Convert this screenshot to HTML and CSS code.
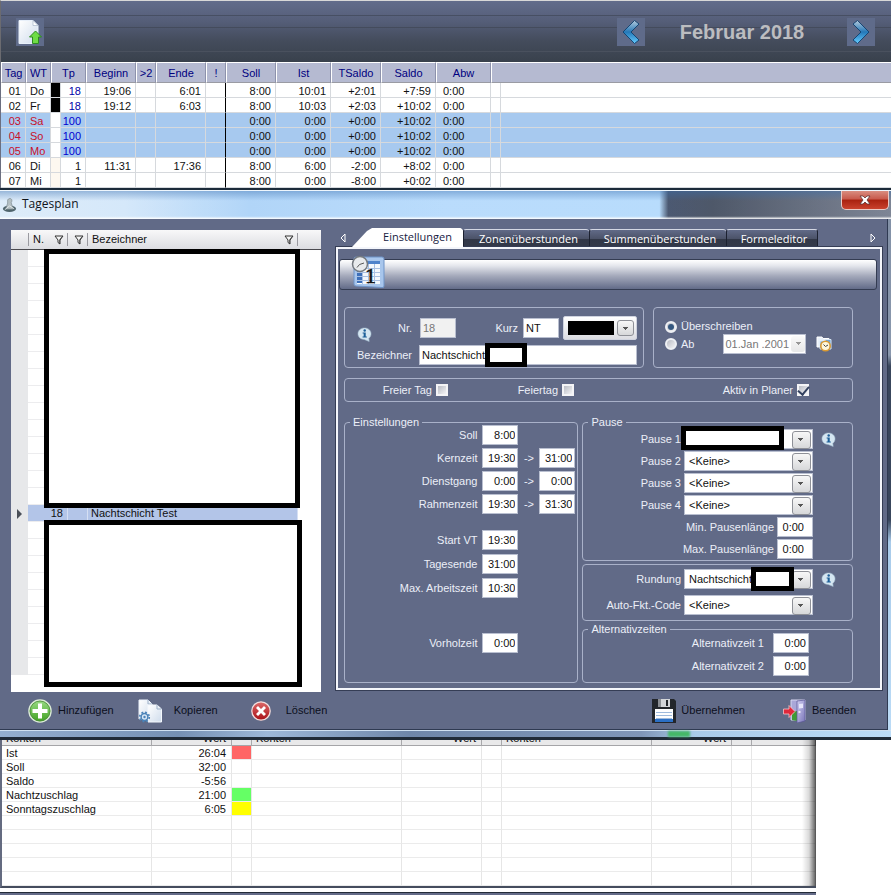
FILE: index.html
```html
<!DOCTYPE html>
<html lang="de">
<head>
<meta charset="utf-8">
<title>Tagesplan</title>
<link rel="stylesheet" href="styles.css">
</head>
<body>
<svg class="defs" width="0" height="0" aria-hidden="true">
  <defs>
    <linearGradient id="gArrow" x1="0" y1="0" x2="0" y2="1"><stop offset="0" stop-color="#b4c9da"/><stop offset=".5" stop-color="#2478b8"/><stop offset="1" stop-color="#66ccff"/></linearGradient>
    <linearGradient id="gPage" x1="0" y1="0" x2="1" y2="1"><stop offset="0" stop-color="#ffffff"/><stop offset="1" stop-color="#cfdcec"/></linearGradient>
    <linearGradient id="gGreen" x1="0" y1="0" x2="0" y2="1"><stop offset="0" stop-color="#9bdc86"/><stop offset="1" stop-color="#3fa01f"/></linearGradient>
    <linearGradient id="gRed" x1="0" y1="0" x2="0" y2="1"><stop offset="0" stop-color="#dd6a6a"/><stop offset="1" stop-color="#a80f17"/></linearGradient>
    <linearGradient id="gDoor" x1="0" y1="0" x2="1" y2="1"><stop offset="0" stop-color="#cfcdf2"/><stop offset="1" stop-color="#7a76b8"/></linearGradient>
    <symbol id="info" viewBox="0 0 16 16">
      <path d="M8 1C4 1 1 3.6 1 7.2S4 13.300 7.600 13.300L13 15.500L12.600 12C14.200 10.900 15 9.200 15 7.200C15 3.600 12 1 8 1Z" fill="#d5e6f1" stroke="#9db8cc" stroke-width=".6"/>
      <circle cx="8.200" cy="3.700" r="1.300" fill="#1d5f98"/>
      <path d="M6 5.800H9.300V10H10.500V11.300H5.900V10H7.100V7H6Z" fill="#1d5f98"/>
    </symbol>
    <symbol id="funnel" viewBox="0 0 10 10">
      <path d="M1 1H9L6 5V9L4 7.500V5Z" fill="#f5f5f5" stroke="#333" stroke-width="1"/><path d="M5.500 4.500L8 1.500L8.500 1.500L6 5V8.500L5.500 8Z" fill="#333"/>
    </symbol>
  </defs>
</svg>

<header class="toolbar">
  <button class="tool" aria-label="Exportieren">
    <svg viewBox="0 0 28 28"><path d="M3 2.500H17L22 7.500V25.500H3Z" fill="url(#gPage)" stroke="#e8f0fa"/><path d="M17 2.500V7.500H22Z" fill="#fff" stroke="#a9b8ca" stroke-width=".7"/><path d="M19.500 13L25.500 19H22.500V25.500H16.500V19H13.500Z" fill="#6fdc45" stroke="#2d8a1e"/></svg>
  </button>
  <div class="month">
    <button class="tool" aria-label="Vorheriger Monat">
      <svg viewBox="0 0 28 28"><path d="M17.500 2.500L22 6L14 14L22 22L17.500 25.500L6 14Z" fill="url(#gArrow)" stroke="#0f3f6e" stroke-width=".9"/></svg>
    </button>
    <h1>Februar 2018</h1>
    <button class="tool" aria-label="Nächster Monat">
      <svg viewBox="0 0 28 28"><path d="M10.500 2.500L6 6L14 14L6 22L10.500 25.500L22 14Z" fill="url(#gArrow)" stroke="#0f3f6e" stroke-width=".9"/></svg>
    </button>
  </div>
</header>

<table class="days">
  <colgroup><col class="w25"><col class="w25"><col class="w10"><col class="w25"><col class="w50"><col class="w20"><col class="w50"><col class="w20"><col class="w50"><col class="w55"><col class="w50"><col class="w55"><col class="w55"><col class="w10"><col></colgroup>
  <thead><tr><th>Tag</th><th>WT</th><th colspan="2">Tp</th><th>Beginn</th><th>&gt;2</th><th>Ende</th><th>!</th><th>Soll</th><th>Ist</th><th>TSaldo</th><th>Saldo</th><th>Abw</th><th colspan="2"></th></tr></thead>
  <tbody id="days"></tbody>
</table>

<section class="dialog" aria-label="Tagesplan">
  <div class="titlebar">
    <svg class="app" viewBox="0 0 16 16"><ellipse cx="8" cy="12" rx="7" ry="3.500" fill="#4f646c"/><path d="M6 2.500C8 0 11 1 10.500 4L9.800 5.500L12 12.500H4L6 6Z" fill="#b4bfc3" stroke="#6f7d82" stroke-width=".6"/><path d="M3 13L8 9L13 12" stroke="#dfe6e8" fill="none"/></svg>
    <h2>Tagesplan</h2>
    <button class="close" aria-label="Schließen"><svg viewBox="0 0 12 10"><path d="M1 1H4L6 3L8 1H11L8 5L11 9H8L6 7L4 9H1L4 5Z" fill="#fff" stroke="#5a3434" stroke-width=".8"/></svg></button>
  </div>

  <div class="client">
    <div class="main">
      <div class="list">
        <table class="plans">
          <colgroup><col class="w17"><col class="w40"><col class="w20"><col><col class="w23"></colgroup>
          <thead><tr><th></th><th><span>N.<svg class="fn"><use href="#funnel"/></svg></span></th><th><span><svg class="fn"><use href="#funnel"/></svg></span></th><th><span>Bezeichner<svg class="fn"><use href="#funnel"/></svg></span></th><th></th></tr></thead>
          <tbody id="plans"></tbody>
        </table>
        <div class="mask mask-top"></div>
        <div class="mask mask-bottom"></div>
      </div>

      <div class="editor">
        <nav class="tabs">
          <button class="scroll" aria-label="Zurück"><svg viewBox="0 0 6 10"><path d="M5 1L1 5L5 9Z" fill="none" stroke="#fff"/></svg></button>
          <button class="tab active">Einstellungen</button>
          <button class="tab t2">Zonenüberstunden</button>
          <button class="tab t3">Summenüberstunden</button>
          <button class="tab t4">Formeleditor</button>
          <button class="scroll next" aria-label="Weiter"><svg viewBox="0 0 6 10"><path d="M1 1L5 5L1 9Z" fill="none" stroke="#fff"/></svg></button>
        </nav>
        <div class="page">
          <div class="banner">
            <svg class="calendar" viewBox="0 0 34 34">
              <path d="M5 2H31Q33 2 33 4V31Q33 33 31 32.500L5 31Q3 31 3 29V4Q3 2 5 2Z" fill="#a8c6ec" stroke="#6f94c8"/>
              <path d="M6 6H29V29H6Z" fill="#f4f8fd"/>
              <path d="M6 6H29V9H6Z" fill="#4f83cb"/><path d="M6 10H11V28H6Z" fill="#3d6fb9"/>
              <path d="M6 13.500H29M6 17.500H29M6 21.500H29M6 25.500H29M11.500 9V29M17.500 9V29M23.500 9V29" stroke="#a9c0e2"/>
              <circle cx="9" cy="9" r="7.500" fill="#e8eaec" stroke="#74797f" stroke-width="1.500"/><path d="M13 8L8.500 9.500L6 12.500" fill="none" stroke="#555"/>
              <text x="14" y="28" class="calnum">1</text>
            </svg>
          </div>

          <div class="form">
            <div class="pair">
              <div class="group ident">
                <div class="line">
                  <svg class="info low"><use href="#info"/></svg>
                  <label class="push" for="nr">Nr.</label>
                  <input id="nr" class="time left" value="18" disabled>
                  <label class="push kurz" for="kurz">Kurz</label>
                  <input id="kurz" class="time left" value="NT">
                  <button class="color" aria-label="Farbe"><span class="swatch"></span><span class="drop"></span></button>
                </div>
                <div class="line">
                  <label class="lead" for="bez">Bezeichner</label>
                  <span class="field grow"><input id="bez" class="left wide" value="Nachtschicht"><span class="mask mask-name"></span></span>
                </div>
              </div>
              <div class="group mode">
                <div class="opts">
                  <label><input type="radio" name="mode" checked>Überschreiben</label>
                  <div class="line tight">
                    <label><input type="radio" name="mode">Ab</label>
                    <span class="combo date off"><select aria-label="Datum" disabled><option>01.Jan .2001</option></select></span>
                    <svg class="hist" viewBox="0 0 16 16"><path d="M1 1H6L7 2.500H13V11H1Z" fill="#e9f1fa" stroke="#fff"/><path d="M4 5H9L10 3.500H15V13H4Z" fill="#6fa3d8" stroke="#dbe9f7"/><circle cx="9.500" cy="10" r="4.700" fill="#fdf6dc" stroke="#d99a33" stroke-width="1.600"/><path d="M7.500 8.500L9.500 10.500L12 9" fill="none" stroke="#444"/></svg>
                  </div>
                </div>
              </div>
            </div>

            <div class="group flags">
              <label>Freier Tag<input type="checkbox"></label>
              <label>Feiertag<input type="checkbox"></label>
              <label>Aktiv in Planer<input type="checkbox" checked></label>
            </div>

            <div class="cols">
              <fieldset class="times">
                <legend>Einstellungen</legend>
                <div class="grid up">
                  <label for="soll">Soll</label><input id="soll" class="time" value="8:00"><i></i><i></i>
                  <label for="kern">Kernzeit</label><input id="kern" class="time" value="19:30"><span>-&gt;</span><input class="time" aria-label="Kernzeit bis" value="31:00">
                  <label for="dienst">Dienstgang</label><input id="dienst" class="time" value="0:00"><span>-&gt;</span><input class="time" aria-label="Dienstgang bis" value="0:00">
                  <label for="rahmen">Rahmenzeit</label><input id="rahmen" class="time" value="19:30"><span>-&gt;</span><input class="time" aria-label="Rahmenzeit bis" value="31:30">
                </div>
                <div class="grid day">
                  <label for="start">Start VT</label><input id="start" class="time" value="19:30"><i></i><i></i>
                  <label for="ende">Tagesende</label><input id="ende" class="time" value="31:00"><i></i><i></i>
                  <label for="maxa">Max. Arbeitszeit</label><input id="maxa" class="time" value="10:30"><i></i><i></i>
                </div>
                <div class="grid extra">
                  <label for="vor">Vorholzeit</label><input id="vor" class="time" value="0:00"><i></i><i></i>
                </div>
              </fieldset>

              <div class="stack">
                <fieldset class="pause">
                  <legend>Pause</legend>
                  <div class="rows">
                    <div class="row"><label for="p1">Pause 1</label><span class="combo"><select id="p1"><option></option></select><span class="mask mask-pause"></span></span><svg class="info"><use href="#info"/></svg></div>
                    <div class="row"><label for="p2">Pause 2</label><span class="combo"><select id="p2"><option>&lt;Keine&gt;</option></select></span></div>
                    <div class="row"><label for="p3">Pause 3</label><span class="combo"><select id="p3"><option>&lt;Keine&gt;</option></select></span></div>
                    <div class="row"><label for="p4">Pause 4</label><span class="combo"><select id="p4"><option>&lt;Keine&gt;</option></select></span></div>
                    <div class="row short"><label for="pmin">Min. Pausenlänge</label><input id="pmin" class="time mid" value="0:00"></div>
                    <div class="row short"><label for="pmax">Max. Pausenlänge</label><input id="pmax" class="time mid" value="0:00"></div>
                  </div>
                </fieldset>
                <div class="group round">
                  <div class="row"><label for="rund">Rundung</label><span class="combo"><select id="rund"><option>Nachtschicht</option></select><span class="mask mask-round"></span></span><svg class="info"><use href="#info"/></svg></div>
                  <div class="row"><label for="auto">Auto-Fkt.-Code</label><span class="combo"><select id="auto"><option>&lt;Keine&gt;</option></select></span></div>
                </div>
                <fieldset class="alt">
                  <legend>Alternativzeiten</legend>
                  <div class="rows alt-rows">
                    <div class="row"><label for="a1">Alternativzeit 1</label><input id="a1" class="time" value="0:00"></div>
                    <div class="row"><label for="a2">Alternativzeit 2</label><input id="a2" class="time" value="0:00"></div>
                  </div>
                </fieldset>
              </div>
            </div>
          </div>
        </div>
      </div>
    </div>

    <footer class="actions">
      <button class="add"><svg viewBox="0 0 24 24"><circle cx="12" cy="12" r="11" fill="url(#gGreen)" stroke="#dcebd8" stroke-width="1.500"/><circle cx="12" cy="12" r="10" fill="none" stroke="#4b8a3a" stroke-width=".8"/><path d="M10 4.500H14V10H19.500V14H14V19.500H10V14H4.500V10H10Z" fill="#fff"/></svg>Hinzufügen</button>
      <button class="copy"><svg viewBox="0 0 24 24"><path d="M1 1H10L14 5V20H1Z" fill="url(#gPage)" stroke="#edf3fb"/><path d="M10 1V5H14" fill="none" stroke="#9cb0c8"/><path d="M10 6H19L23.500 10V23H10Z" fill="url(#gPage)" stroke="#f4f8fd"/><path d="M19 6V10H23.500" fill="none" stroke="#9cb0c8"/><circle cx="6.500" cy="18" r="3.400" fill="#d6e6f5" stroke="#4b83b8" stroke-width="1.500"/><circle cx="6.500" cy="18" r="4.800" fill="none" stroke="#4b83b8" stroke-width="1.600" stroke-dasharray="1.900 1.870"/><circle cx="6.500" cy="18" r="1.200" fill="#4b83b8"/></svg>Kopieren</button>
      <button class="del"><svg viewBox="0 0 20 20"><circle cx="10" cy="10" r="9.200" fill="url(#gRed)" stroke="#f1dede" stroke-width="1.300"/><path d="M5 7L7 5L10 8L13 5L15 7L12 10L15 13L13 15L10 12L7 15L5 13L8 10Z" fill="#fff"/></svg>Löschen</button>
      <button class="save"><svg viewBox="0 0 24 24"><path d="M0 0H22L24 2V24H0Z" fill="#23262b"/><path d="M6 0H18V8H6Z" fill="#d3d5d8"/><path d="M14 1H16V7H14Z" fill="#23262b"/><path d="M6 0H9V8H6Z" fill="#8b8e93"/><path d="M3 10H21V23H3Z" fill="#fdfdfe"/><path d="M3 20H21V23H3Z" fill="#2b6fc4"/><path d="M4 13.500H20M4 16.500H20M4 19.500H20" stroke="#9db9dc"/></svg>Übernehmen</button>
      <button class="quit"><svg viewBox="0 0 24 24"><path d="M8 1H22V21H8Z" fill="#a9a7d8" stroke="#d8d7f0"/><path d="M9 12H14V22L9 21Z" fill="#3f9a35"/><path d="M14 2L22 1V22L14 24Z" fill="url(#gDoor)" stroke="#5a5695" stroke-width=".7"/><path d="M16 5L20 4.500V9L16 9.500Z" fill="#e6e6fa"/><path d="M15.500 13H17.500" stroke="#fff" stroke-width="1.500"/><path d="M.5 10H6V6.500L12 12.500L6 18.500V15H.5Z" fill="#e0283c" stroke="#f6c3c8" stroke-width=".8"/></svg>Beenden</button>
    </footer>
  </div>
  <div class="frame-bottom"><span class="ghost"></span></div>
</section>

<section class="accounts">
  <table>
    <colgroup><col><col class="w80"><col class="w20"><col><col class="w80"><col class="w20"><col><col class="w80"><col class="w20"><col class="w64"></colgroup>
    <thead><tr><th>Konten</th><th class="r">Wert</th><th></th><th>Konten</th><th class="r">Wert</th><th></th><th>Konten</th><th class="r">Wert</th><th></th><th></th></tr></thead>
    <tbody id="accounts"></tbody>
  </table>
</section>
<div class="base"></div>
<script src="app.js"></script>
</body>
</html>
```
FILE: styles.css
```css
* { box-sizing: border-box; }
body {
  margin: 0;
  background: #fff;
  color: #111;
  font: 11px/13px "Liberation Sans", Arial, sans-serif;
}
button, input, select { font: inherit; color: inherit; margin: 0; }
button { border: 0; background: none; padding: 0; }
h1, h2 { margin: 0; font-weight: normal; }
table { border-collapse: separate; border-spacing: 0; table-layout: fixed; width: 100%; }
.defs { position: absolute; }

.w10 { width: 10px; } .w17 { width: 17px; } .w20 { width: 20px; } .w23 { width: 23px; }
.w25 { width: 25px; } .w40 { width: 40px; } .w50 { width: 50px; } .w55 { width: 55px; }
.w64 { width: 64px; } .w80 { width: 80px; }

/* Month toolbar */
.toolbar {
  display: flex;
  align-items: center;
  justify-content: space-between;
  height: 62px;
  padding: 0 16px 0 15px;
  border-top: 1px solid #d8d8d8;
  border-left: 1px solid #6b6b70;
  background:
    linear-gradient(#474f63, #474f63) 0 14px / 100% 1px no-repeat,
    linear-gradient(#444b5c, #444b5c) 0 26px / 100% 1px no-repeat,
    linear-gradient(#4a515e, #4a515e) 0 50px / 100% 1px no-repeat,
    linear-gradient(#626c8b, #545d77 35%, #444c5c 65%, #39414c);
}
.tool { width: 28px; height: 28px; background: #5f6b8a; }
.tool svg { display: block; width: 28px; height: 28px; }
.month { display: flex; align-items: center; }
.month h1 { width: 202px; padding-right: 8px; text-align: center; font: bold 20px/24px "Liberation Sans", Arial, sans-serif; color: #bcbdc0; }

/* Day table */
.days { border-left: 1px solid #6b6f80; }
.days th {
  height: 21px;
  padding: 2px 0 0;
  background: #b5bad1;
  border-top: 1px solid #fff;
  border-left: 1px solid #fff;
  border-right: 1px solid #8d92ab;
  border-bottom: 1px solid #9a9ba3;
  color: #00007f;
  font-weight: normal;
  text-align: center;
}
.days th:last-child { border-right: 0; }
.days td {
  height: 15px;
  padding: 2px 4px 0 0;
  border-right: 1px solid #d6d9dd;
  border-bottom: 1px solid #d6d9dd;
  line-height: 12px;
  text-align: right;
  white-space: nowrap;
}
.days td:nth-child(2), .days td:nth-child(13) { text-align: left; padding-left: 4px; }
.days td:nth-child(13) { padding-left: 7px; }
.days td:nth-child(3) { padding: 0; }
.days td:nth-child(8) { border-right: 1px solid #000; }
.days td:last-child { border-right: 0; }
.days .black { background: #000; }
.days .cream { background: #fdf8f0; }
.days .plan { color: #0000a8; }
.days .off td { background: #a7c9ef; }
.days .off td:nth-child(3) { background: #fff; }
.days .off td:nth-child(-n+2) { color: #c8102a; }
.days .off td:nth-child(4) { color: #0000d0; }

/* Dialog window */
.dialog {
  position: relative;
  z-index: 1;
  border-top: 2px solid #1c2b3a;
  background: linear-gradient(#8290a6, #8a98ad 30%, #39465c 32%, #39465c 60%, #a9cbea 64%, #bcdcf7);
}
.titlebar {
  display: flex;
  align-items: center;
  height: 29px;
  padding-left: 2px;
  border-top: 1px solid #eef6fd;
  background:
    linear-gradient(180deg, rgba(70, 120, 180, .45), rgba(255, 255, 255, .05) 35%, rgba(255, 255, 255, .05) 90%, #fff),
    linear-gradient(90deg, #dcebf9 0, #d3e7fa 14%, #add3f8 28%, #b6dafc 50%, #b4dafc 74%, #42506a 75%, #454f61 80%, #777f90);
}
.app { width: 15px; height: 16px; }
.titlebar h2 { margin: 0 0 2px 5px; font: 12px/16px "Open Sans", sans-serif; color: #10151c; }
.close {
  display: grid;
  place-items: center;
  align-self: flex-start;
  width: 48px;
  height: 19px;
  margin: 0 2px 0 auto;
  border: 1px solid #e9c9c4;
  border-top: 0;
  border-radius: 0 0 5px 5px;
  background: linear-gradient(#d98d80, #c8594b 45%, #a9210f 50%, #c9412d);
}
.close svg { width: 12px; height: 10px; }
.client {
  margin-right: 3px;
  padding: 9px 0 0 11px;
  background: #616a87;
  border-right: 1px solid #2f3a52;
  border-bottom: 1px solid #2f3a52;
}
.main { display: grid; grid-template-columns: 310px 1fr; gap: 14px; padding-right: 5px; }
.editor { padding-bottom: 2px; }
.frame-bottom {
  height: 10px;
  border-bottom: 3px solid #202b38;
  border-top: 1px solid #cfe0f1;
  background: linear-gradient(90deg, #94afd0, #7590b4 20%, #9db8d8 30%, #6f87aa 46%, #7f96b8 72%, #a9cbe9 78%, #bcdcf7);
}
.ghost { display: block; width: 22px; height: 6px; margin-left: 75%; background: #45b868; filter: blur(1px); }

/* Plan list */
.list { position: relative; margin-top: 2px; background: #fff; }
.plans th {
  height: 20px;
  padding: 0;
  background: linear-gradient(#f8f8f9, #dcdde1);
  border-bottom: 1px solid #4b4b50;
  font-weight: normal;
  text-align: left;
}
.plans th span { display: flex; align-items: center; justify-content: space-between; padding: 0 3px 0 4px; border-right: 1px solid #9a9aa0; }
.plans th:nth-child(2) span { border-left: 1px solid #9a9aa0; }
.plans th:nth-child(3) span { justify-content: flex-end; height: 13px; }
.fn { width: 10px; height: 10px; }
.plans td { height: 17px; padding: 0; border-bottom: 1px solid #ececee; line-height: 16px; }
.plans td:first-child { background: #e7e8ea; border: 0; }
.plans td:last-child { border: 0; }
.plans .sel td { background: #b3c5e8; border-right: 1px solid #d5dff3; }
.plans .sel td:first-child { background: #e7e8ea; border: 0; }
.plans .sel td:last-child { background: #fff; border: 0; }
.plans .sel td:nth-child(2) { text-align: right; padding-right: 4px; }
.plans .sel td:nth-child(4) { padding-left: 3px; }
.pointer { display: block; margin-left: 6px; width: 0; border: 5px solid transparent; border-left-color: #4a4f58; border-right: 0; }

.mask { position: absolute; background: #fff; border: 5px solid #000; pointer-events: none; }
.mask-top { left: 33px; right: 21px; top: 19px; height: 259px; }
.mask-bottom { left: 33px; right: 19px; top: 290px; height: 167px; }
.mask-name { left: 66px; top: -2px; width: 42px; height: 24px; }
.mask-pause { left: -3px; top: -3px; width: 103px; height: 24px; }
.mask-round { right: 19px; top: -2px; width: 43px; height: 24px; z-index: 1; }

/* Tabs */
.tabs { display: flex; height: 19px; font: 11px/18px "Open Sans", sans-serif; }
.scroll { width: 17px; padding-left: 5px; }
.scroll svg { display: block; width: 6px; height: 10px; }
.scroll.next { margin-left: auto; }
.tab {
  height: 18px;
  margin-top: 1px;
  padding: 0 0 2px 4px;
  border-left: 1px solid #1c2130;
  border-top: 1px solid #d4d8e4;
  border-radius: 3px 3px 0 0;
  background: linear-gradient(#616a87, #4c5369 50%, #313747 55%, #343a4a);
  color: #fff;
  white-space: nowrap;
}
.tab.active { width: 111px; height: 19px; margin-top: 0; padding-left: 20px; border: 0; background: #fff; color: #16213f; clip-path: polygon(0 100%, 15px 3px, 20px 0, 109px 0, 100% 2px, 100% 100%); }
.t2 { width: 126px; } .t3 { width: 137px; } .t4 { width: 92px; border-right: 1px solid #1c2130; }

/* Tab page */
.page { padding-bottom: 5px; border: 2px solid #f4f6fb; outline: 1px solid #353d55; margin-left: 1px; }
.banner {
  position: relative;
  height: 31px;
  margin: 10px 3px 17px 1px;
  border: 1px solid #343c52;
  border-radius: 3px;
  background: linear-gradient(#fff, #e4e6ec 20%, #a4a9bb 55%, #626b88);
}
.calendar { position: absolute; left: 11px; top: -5px; width: 34px; height: 34px; }
.calnum { font: 22px "Liberation Serif", serif; fill: #111; stroke: #111; stroke-width: .6px; }
.form { display: flex; flex-direction: column; margin: 0 27px 0 6px; color: #eceff8; }
.pair { display: grid; grid-template-columns: 3fr 2fr; gap: 9px; }
.group, fieldset { border: 1px solid #a9b1c9; border-radius: 4px; }
.ident { display: flex; flex-direction: column; gap: 5px; padding: 8px 6px 2px 12px; }
.line { display: flex; align-items: center; }
.info { flex: none; width: 15px; height: 15px; }
.low { align-self: flex-end; margin-bottom: -2px; }
.push { width: 40px; margin-right: 8px; text-align: right; }
.kurz { width: 62px; margin-right: 5px; }
.lead { width: 55px; margin-right: 7px; }
input:not([type]), select {
  height: 20px;
  padding: 0 2px;
  border: 1px solid #b9bfd0;
  border-radius: 0;
  background: #fff;
  color: #111;
}
.time { width: 36px; text-align: right; }
input.left { text-align: left; }
input.mid { padding-right: 8px; }
input:disabled { background: #f1f1f1; color: #777; }
.field, .combo { position: relative; display: flex; }
.grow { flex: 1; }
.wide { width: 100%; }
.color { display: flex; align-items: center; gap: 3px; flex: 1; height: 24px; margin-left: 4px; padding: 0 2px 0 4px; background: linear-gradient(#fff, #dcdde2); border-radius: 2px; border: 1px solid #cfd3df; }
.swatch { flex: 1; height: 14px; background: #000; }
.drop, .combo::after {
  width: 17px;
  height: 16px;
  border: 1px solid #8e9097;
  border-radius: 3px;
  background: linear-gradient(#555, #555) 5px 6px / 5px 1px no-repeat, linear-gradient(#555, #555) 6px 7px / 3px 1px no-repeat, linear-gradient(#555, #555) 7px 8px / 1px 1px no-repeat, linear-gradient(#f7f7f7, #d7d8da);
}
.combo::after { content: ""; position: absolute; right: 2px; top: 2px; pointer-events: none; }
.combo { width: 129px; }
.combo select { appearance: none; width: 100%; padding-left: 4px; }
.combo.off::after { width: 14px; right: 1px; border: 0; opacity: .6; }
.combo.date { width: 83px; margin-left: 29px; margin-right: 10px; }
.date select { padding: 0 0 0 1px; color: #777; opacity: 1; }
.hist { width: 16px; height: 16px; }

.opts { padding: 11px 0 0 11px; }
.opts label { display: flex; align-items: center; gap: 4px; height: 15px; }
.tight { height: 20px; }
input[type="radio"], input[type="checkbox"] {
  appearance: none;
  display: flex;
  justify-content: center;
  align-items: center;
  width: 12px;
  height: 12px;
  border: 2px solid #f4f4f6;
  background: linear-gradient(135deg, #b9bcc4, #f3f3f5);
}
input[type="radio"] { border-radius: 6px; border-color: #eef0f4; }
input[type="radio"]:checked::after { content: ""; width: 6px; height: 6px; border-radius: 3px; background: #35577f; }
input[type="checkbox"]:checked::after { content: ""; flex: none; width: 5px; height: 9px; margin-bottom: 2px; border: solid #33415f; border-width: 0 2px 2px 0; transform: rotate(40deg); }

.flags { display: grid; grid-template-columns: 103px 126px 1fr; height: 24px; margin-top: 10px; padding-right: 43px; align-items: center; }
.flags label { display: flex; justify-content: flex-end; align-items: center; gap: 4px; }

.cols { display: grid; grid-template-columns: 13fr 15fr; gap: 4px; margin-top: 14px; }
fieldset { margin: 0; padding: 0; min-width: 0; }
legend { margin-left: 5px; padding: 0 3px; height: 13px; }
.grid { display: grid; grid-template-columns: 1fr 36px 21px 36px; row-gap: 3px; align-items: center; text-align: center; padding-right: 2px; }
.grid label { text-align: right; padding-right: 5px; }
.up { margin-top: -4px; }
.day { margin-top: 16px; row-gap: 4px; }
.extra { margin-top: 35px; margin-bottom: 28px; }
.stack { display: flex; flex-direction: column; }
.rows { display: flex; flex-direction: column; gap: 2px; padding-bottom: 1px; }
.row { display: grid; grid-template-columns: 1fr 129px 39px; align-items: center; }
.row label { text-align: right; padding-right: 3px; }
.row .info { margin-left: 8px; }
.row.short { grid-template-columns: 1fr 36px 39px; }
.round { display: flex; flex-direction: column; gap: 6px; margin-top: 3px; padding: 4px 0 5px; }
.alt { margin-top: 2px; }
.alt-rows { margin-top: -3px; gap: 3px; padding-bottom: 6px; }
.alt-rows .row { grid-template-columns: 1fr 36px 43px; }
.alt-rows label { padding-right: 9px; }

/* Dialog buttons */
.actions { display: flex; align-items: center; height: 37px; padding-left: 17px; color: #0c0f1c; }
.actions button { display: flex; align-items: center; gap: 6px; }
.actions svg { width: 24px; height: 24px; }
.actions .copy { margin-left: 24px; gap: 12px; }
.actions .del { margin-left: 33px; gap: 15px; }
.actions .del svg { width: 20px; height: 20px; }
.actions .save { margin-left: auto; gap: 5px; }
.actions .quit { margin: 0 31px 0 38px; gap: 5px; }

/* Account table */
.accounts {
  position: relative;
  margin: -14px 75px 0 0;
  border-left: 2px solid #646b80;
  border-bottom: 2px solid #454d5e;
}
.accounts::after { content: ""; position: absolute; inset: 0 0 0 auto; width: 14px; background: linear-gradient(90deg, transparent, rgba(0, 0, 0, .15) 50%, rgba(0, 0, 0, .65)); }
.accounts th { height: 20px; padding: 5px 5px 0 4px; background: #e9e9ea; border-right: 1px solid #a9a9ac; border-bottom: 1px solid #a5a5a8; font-weight: normal; text-align: left; line-height: 12px; }
.accounts td { height: 14px; padding: 1px 5px 0 4px; line-height: 12px; border-right: 1px solid #e6e6e6; border-bottom: 1px solid #ebebeb; }
.accounts .r { text-align: right; }
.accounts .red { background: #ff6565; }
.accounts .green { background: #65ff65; }
.accounts .yellow { background: #ffff00; }
.base { height: 4px; margin: 4px 75px 0 0; border-top: 1px solid #222a38; background: #646b88; }
```
FILE: app.js
```js
const days = [
  ["01", "Do", "black", "18", "19:06", "6:01", "8:00", "10:01", "+2:01", "+7:59"],
  ["02", "Fr", "black", "18", "19:12", "6:03", "8:00", "10:03", "+2:03", "+10:02"],
  ["03", "Sa", "", "100", "", "", "0:00", "0:00", "+0:00", "+10:02"],
  ["04", "So", "", "100", "", "", "0:00", "0:00", "+0:00", "+10:02"],
  ["05", "Mo", "", "100", "", "", "0:00", "0:00", "+0:00", "+10:02"],
  ["06", "Di", "cream", "1", "11:31", "17:36", "8:00", "6:00", "-2:00", "+8:02"],
  ["07", "Mi", "cream", "1", "", "", "8:00", "0:00", "-8:00", "+0:02"]
];
document.getElementById("days").innerHTML = days.map(d =>
  `<tr class="${d[3] === "100" ? "off" : ""}"><td>${d[0]}</td><td>${d[1]}</td><td class="${d[2]}"></td>` +
  `<td class="${d[3] === "18" ? "plan" : ""}">${d[3]}</td><td>${d[4]}</td><td></td><td>${d[5]}</td><td></td>` +
  `<td>${d[6]}</td><td>${d[7]}</td><td>${d[8]}</td><td>${d[9]}</td><td>0:00</td><td></td><td></td></tr>`).join("");

const planRows = 25, selected = 15;
document.getElementById("plans").innerHTML = Array.from({ length: planRows }, (_, i) => i === selected
  ? `<tr class="sel"><td><span class="pointer"></span></td><td>18</td><td></td><td>Nachtschicht Test</td><td></td></tr>`
  : "<tr><td></td><td></td><td></td><td></td><td></td></tr>").join("");

const accounts = [["Ist", "26:04", "red"], ["Soll", "32:00", ""], ["Saldo", "-5:56", ""],
  ["Nachtzuschlag", "21:00", "green"], ["Sonntagszuschlag", "6:05", "yellow"]];
document.getElementById("accounts").innerHTML = Array.from({ length: 10 }, (_, i) => {
  const a = accounts[i] || ["", "", ""];
  return `<tr><td>${a[0]}</td><td class="r">${a[1]}</td><td class="${a[2]}"></td>${"<td></td>".repeat(7)}</tr>`;
}).join("");
```
